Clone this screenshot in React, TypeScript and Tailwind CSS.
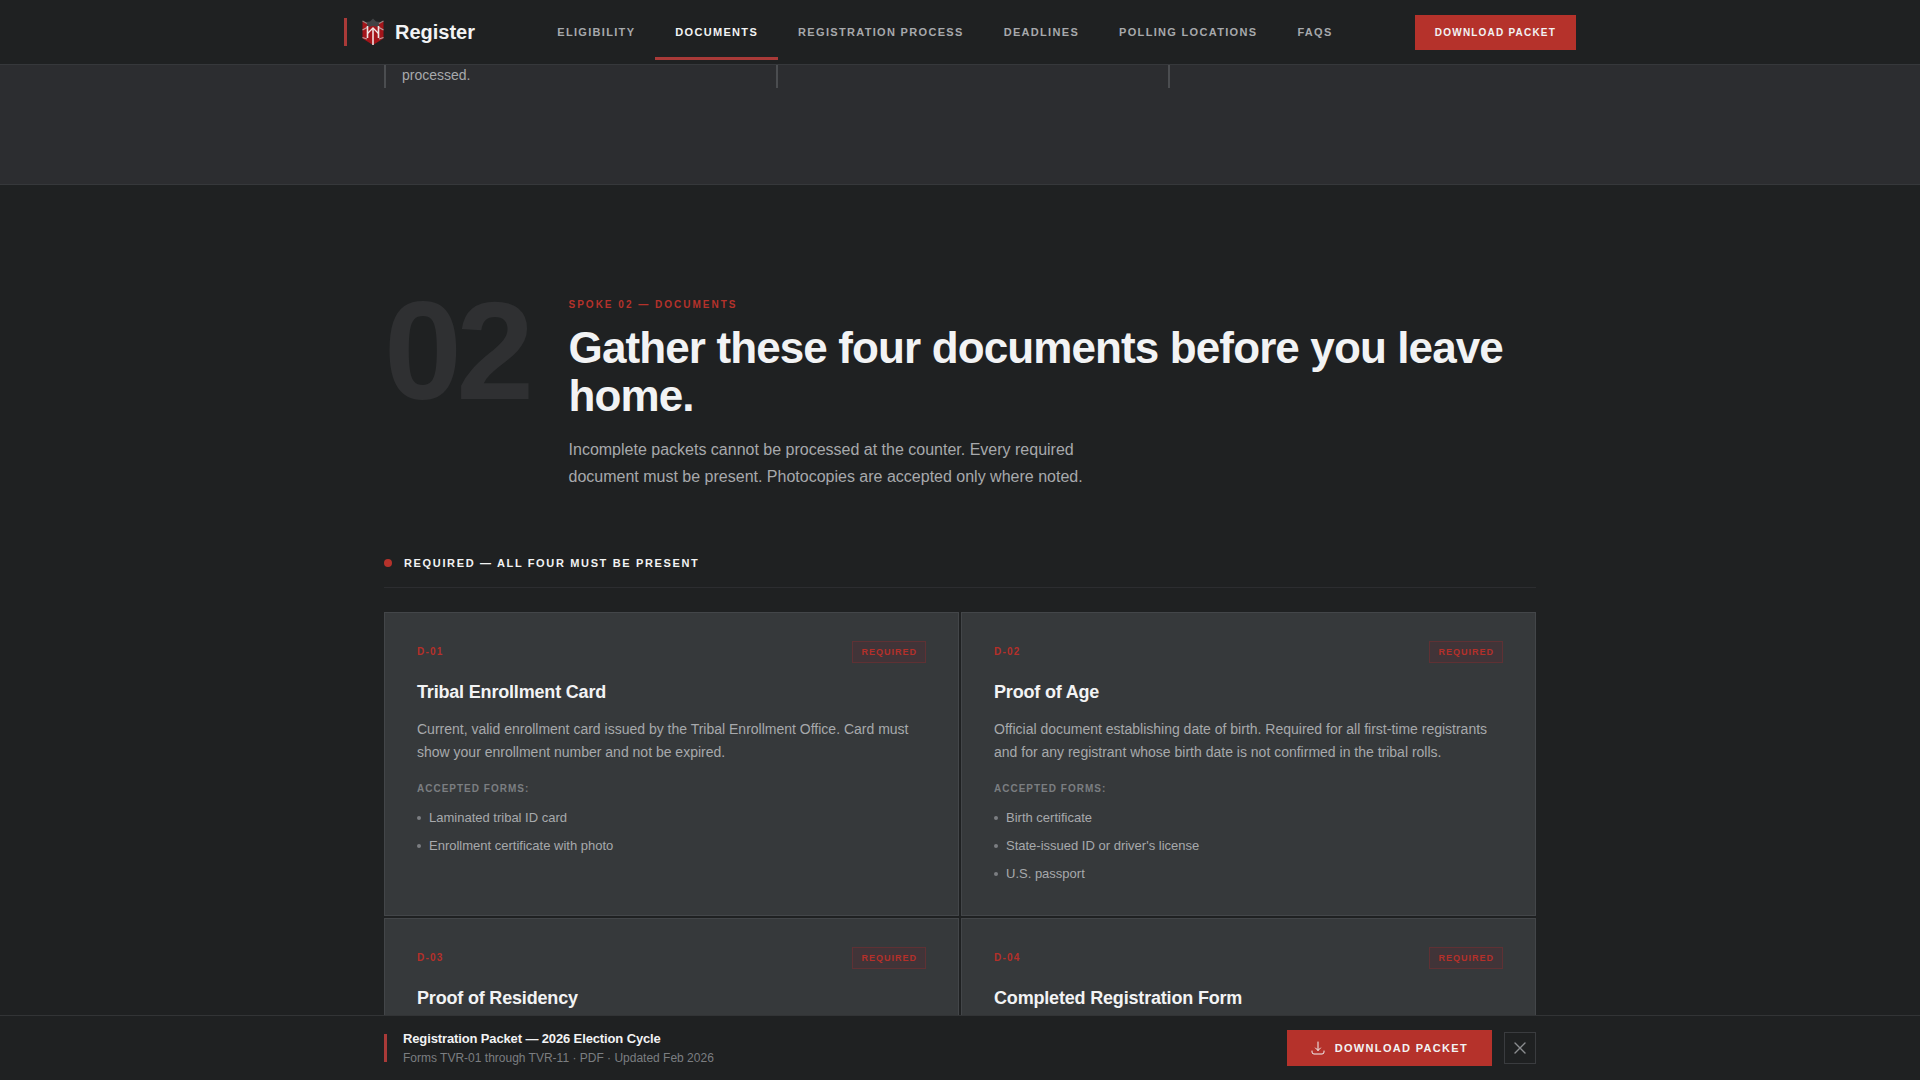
interface DocumentItem {
  id: string;
  title: string;
  description?: string;
  forms?: string[];
}

const navLinks = [
  { label: 'Eligibility', href: '#eligibility' },
  { label: 'Documents', href: '#documents', active: true },
  { label: 'Registration Process', href: '#process' },
  { label: 'Deadlines', href: '#deadlines' },
  { label: 'Polling Locations', href: '#locations' },
  { label: 'FAQs', href: '#faqs' },
];

const documents: DocumentItem[] = [
  {
    id: 'D-01',
    title: 'Tribal Enrollment Card',
    description:
      'Current, valid enrollment card issued by the Tribal Enrollment Office. Card must show your enrollment number and not be expired.',
    forms: ['Laminated tribal ID card', 'Enrollment certificate with photo'],
  },
  {
    id: 'D-02',
    title: 'Proof of Age',
    description:
      'Official document establishing date of birth. Required for all first-time registrants and for any registrant whose birth date is not confirmed in the tribal rolls.',
    forms: ['Birth certificate', "State-issued ID or driver's license", 'U.S. passport'],
  },
  { id: 'D-03', title: 'Proof of Residency' },
  { id: 'D-04', title: 'Completed Registration Form' },
];

const Logo = () => (
  <svg width="24" height="28" viewBox="0 0 24 28" fill="none" aria-hidden="true">
    <path d="M1.500 3.500 L6 5 H18 L22.500 3.500 V20.500 L12 27 L1.500 20.500 Z" fill="#a3151a" />
    <path d="M5.500 4 L9 3.500 L12 0.500 L15 3.500 L18.500 4 L17.500 9 L12 8 L6.500 9 Z" fill="#404345" />
    <path d="M1.500 3 L6 5.500 M22.500 3 L18 5.500" stroke="#9b8583" strokeWidth="1.200" />
    <path d="M1.500 12 L6 9.500 M22.500 12 L18 9.500 M1.500 19.500 L6 21 M22.500 19.500 L18 21" stroke="#b9a19f" strokeWidth="1.300" />
    <path d="M6.500 8 V20 M17.500 8 V20" stroke="#efe6e5" strokeWidth="1.600" />
    <path d="M12 10 V27" stroke="#f4efee" strokeWidth="1.500" />
    <path d="M6.500 15.500 L12 10 L17.500 15.500" stroke="#efe6e5" strokeWidth="1.300" />
  </svg>
);

const DownloadIcon = () => (
  <svg width="14" height="14" viewBox="0 0 14 14" fill="none" stroke="currentColor" strokeWidth="1" strokeLinecap="round" strokeLinejoin="round" aria-hidden="true">
    <path d="M7 1v8.500M4.500 7 7 9.500 9.500 7M1 10v1a2 2 0 0 0 2 2h8a2 2 0 0 0 2-2v-1" />
  </svg>
);

const DocumentCard = ({ doc }: { doc: DocumentItem }) => (
  <article className="border border-[#434649] bg-[#36393b] px-8 pt-7 pb-[30px]">
    <div className="flex items-center justify-between">
      <span className="text-[10px] leading-4 font-bold tracking-[1.2px] text-[#b5302a]">{doc.id}</span>
      <span className="border border-[#5f3134] bg-[#413438] px-2 py-1 text-[9px] leading-3 font-bold tracking-[1px] text-[#b5302a] uppercase">
        Required
      </span>
    </div>
    <h3 className="mt-4 text-lg leading-[27px] font-bold tracking-[-0.18px] text-[#f2f3f4]">{doc.title}</h3>
    {doc.description && (
      <p className="mt-3 text-sm leading-[23px] text-[#a7a9ac]">{doc.description}</p>
    )}
    {doc.forms && (
      <>
        <p className="mt-[17px] text-[10px] leading-4 font-bold tracking-[1px] text-[#7b7e81] uppercase">Accepted forms:</p>
        <ul className="mt-2.5 flex flex-col gap-1.5">
          {doc.forms.map((form) => (
            <li key={form} className="flex items-center gap-2 text-[13px] leading-[22px] text-[#a7a9ac]">
              <span className="size-1 rounded-full bg-[#7b7e81]" />
              {form}
            </li>
          ))}
        </ul>
      </>
    )}
  </article>
);

export default function App() {
  return (
    <div className="flex h-screen flex-col bg-[#1f2122] font-['Liberation_Sans',Arial,sans-serif] text-[#a7a9ac]">
      <header className="bg-[#1f2122]">
        <div className="mx-auto flex h-16 max-w-7xl items-center justify-between px-6">
          <a href="#top" className="flex items-center">
            <span className="h-7 w-[3px] bg-[#a93a38]" />
            <span className="ml-3.5">
              <Logo />
            </span>
            <span className="ml-2.5 text-xl font-bold text-[#f2f3f4]">Register</span>
          </a>
          <nav className="flex">
            {navLinks.map((link) => (
              <a
                key={link.label}
                href={link.href}
                className={`flex h-14 items-center border-y-3 border-t-transparent px-5 text-[11px] font-bold tracking-[1.32px] uppercase ${
                  link.active ? 'border-b-[#a93a38] text-[#f2f3f4]' : 'border-b-transparent text-[#a7a9ac]'
                }`}
              >
                {link.label}
              </a>
            ))}
          </nav>
          <a href="#packet" className="bg-[#b5322b] px-5 py-2.5 text-[10px] leading-[15px] font-bold tracking-[1.2px] text-[#f2f3f4] uppercase">
            Download Packet
          </a>
        </div>
      </header>

      <main className="min-h-0 flex-1 overflow-y-auto [scrollbar-width:none]">
        <section id="eligibility" className="border-y border-[#36383b] bg-[#2c2d30] pb-24">
          <div className="mx-auto grid max-w-7xl grid-cols-3 gap-6 px-16">
            <p className="border-l-2 border-[#4b4d50] pb-0.5 pl-4 text-sm leading-[21px]">processed.</p>
            <div className="border-l-2 border-[#4b4d50]" />
            <div className="border-l-2 border-[#4b4d50]" />
          </div>
        </section>

        <section id="documents" className="mx-auto max-w-7xl px-16 pt-24">
          <div className="flex items-start gap-10">
            <span className="text-[140px] leading-none font-bold tracking-[-0.04em] text-[#2f3032]">02</span>
            <div className="pt-4">
              <p className="text-[10px] leading-4 font-bold tracking-[2px] text-[#b5322b] uppercase">Spoke 02 — Documents</p>
              <h2 className="mt-[11px] text-[44px] leading-[48px] font-bold tracking-[-0.02em] text-[#f2f3f4]">
                Gather these four documents before you leave home.
              </h2>
              <p className="mt-4 max-w-[540px] text-base leading-[27px]">
                Incomplete packets cannot be processed at the counter. Every required document must be present. Photocopies are
                accepted only where noted.
              </p>
            </div>
          </div>

          <div className="mt-16 flex items-center gap-3 border-b border-[#2c2d30] pb-[15px]">
            <span className="size-2 rounded-full bg-[#b5322b]" />
            <h3 className="text-[11px] leading-[18px] font-bold tracking-[1.65px] text-[#f2f3f4] uppercase">
              Required — All four must be present
            </h3>
          </div>

          <div className="mt-6 grid grid-cols-2 gap-0.5">
            {documents.map((doc) => (
              <DocumentCard key={doc.id} doc={doc} />
            ))}
          </div>
        </section>
      </main>

      <footer className="border-t border-[#323436] bg-[#1f2122]">
        <div className="mx-auto flex h-16 max-w-7xl items-center justify-between px-16">
          <div className="flex items-center gap-4">
            <span className="h-7 w-[3px] bg-[#a93a38]" />
            <div>
              <p className="text-[13px] leading-5 font-bold tracking-[-0.13px] text-[#f2f3f4]">Registration Packet — 2026 Election Cycle</p>
              <p className="text-xs leading-[18px] text-[#7b7e81]">Forms TVR-01 through TVR-11 · PDF · Updated Feb 2026</p>
            </div>
          </div>
          <div className="flex items-center gap-3">
            <a href="#packet" className="flex h-9 items-center gap-2.5 bg-[#b5322b] px-6 text-[11px] font-bold tracking-[1.32px] text-[#f2f3f4] uppercase">
              <DownloadIcon />
              Download Packet
            </a>
            <button type="button" aria-label="Dismiss" className="flex size-8 items-center justify-center border border-[#3a3c3f] text-[#8b8d90]">
              <svg width="12" height="12" viewBox="0 0 12 12" stroke="currentColor" strokeWidth="1.4" strokeLinecap="round" aria-hidden="true">
                <path d="M1 1 11 11M11 1 1 11" />
              </svg>
            </button>
          </div>
        </div>
      </footer>
    </div>
  );
}
